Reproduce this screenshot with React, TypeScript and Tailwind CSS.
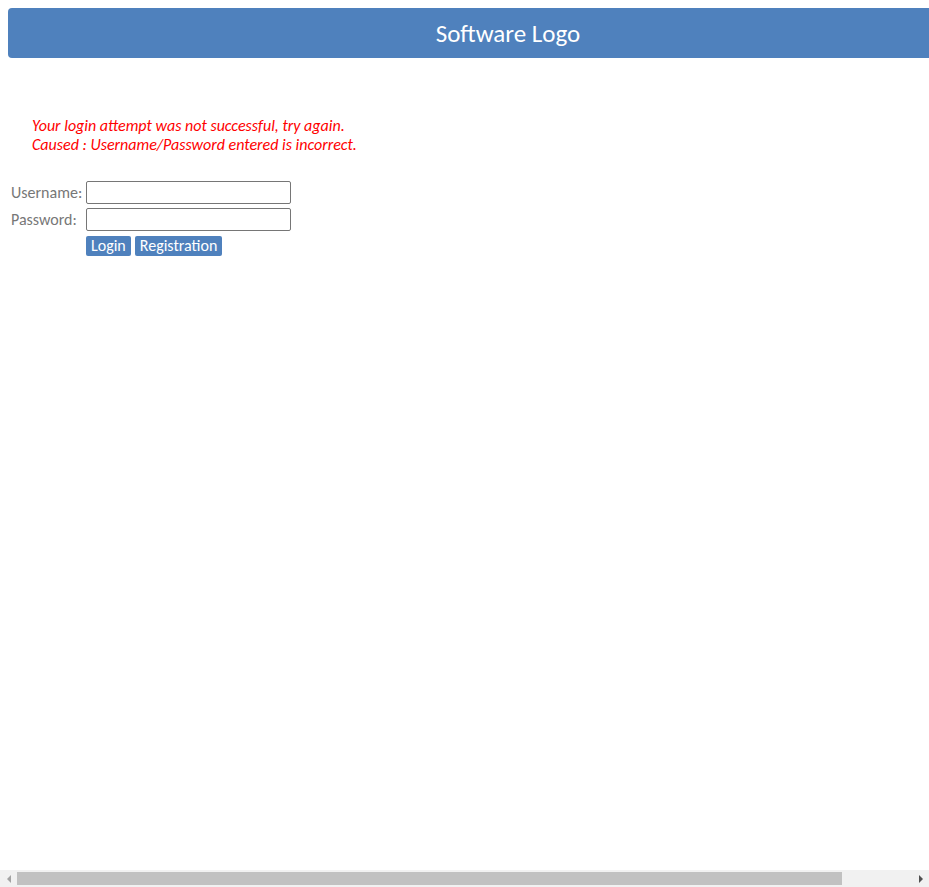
export default function App() {
  return (
    <div className="font-['Calibri','Carlito','Lato',sans-serif]">
      <div className="w-[1000px] m-2">
        <div className="h-[50px] pt-[2px] bg-[#4f81bd] rounded-[4px] flex items-center justify-center text-white text-[25px]">
          Software Logo
        </div>

        <div className="mt-[58px] pl-6 text-[#ff0000] italic text-[16px] leading-[19px]">
          <div>Your login attempt was not successful, try again.</div>
          <div>Caused : Username/Password entered is incorrect.</div>
        </div>

        <div className="mt-[25px] text-[16px] text-[#777]">
          <div className="flex items-center h-[27px]">
            <label className="w-[78px] pl-[3px]">Username:</label>
            <input autoFocus className="w-[205px] h-[23px] border border-[#767676] rounded-[2px] outline-none px-[2px]" />
          </div>
          <div className="flex items-center h-[27px]">
            <label className="w-[78px] pl-[3px]">Password:</label>
            <input type="password" className="w-[205px] h-[23px] border border-[#767676] rounded-[2px] outline-none px-[2px]" />
          </div>
          <div className="flex gap-1 pl-[78px] mt-[3px]">
            <button className="h-5 px-[5px] bg-[#4f81bd] text-white text-[16px] leading-5 rounded-[2px]">Login</button>
            <button className="h-5 px-[5px] bg-[#4f81bd] text-white text-[16px] leading-5 rounded-[2px]">Registration</button>
          </div>
        </div>
      </div>

      {/* horizontal scrollbar as drawn by the browser */}
      <div className="fixed bottom-0 left-0 right-0 h-[17px] bg-[#f1f1f1] flex items-center">
        <div className="w-[17px] h-full flex items-center justify-center">
          <div className="w-0 h-0 border-y-[4px] border-y-transparent border-r-[4px] border-r-[#a3a3a3]" />
        </div>
        <div className="w-[825px] h-[13px] bg-[#c1c1c1]" />
        <div className="flex-1" />
        <div className="w-[17px] h-full flex items-center justify-center">
          <div className="w-0 h-0 border-y-[4px] border-y-transparent border-l-[4px] border-l-[#505050]" />
        </div>
      </div>
    </div>
  );
}
